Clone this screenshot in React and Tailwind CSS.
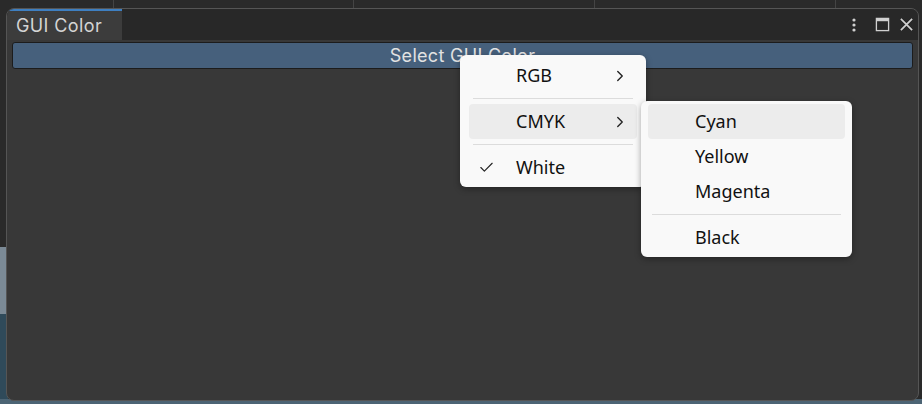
import { ChevronRight, Check } from 'lucide-react';

function MenuItem({ label, check, sub, active }) {
  return (
    <div
      className={`flex items-center h-[35px] rounded-[4px] ${active ? 'bg-[#ececec]' : ''}`}
    >
      <div className="w-[47px] flex justify-start pl-[9px]">
        {check && <Check className="w-[17px] h-[17px] text-[#222]" strokeWidth={1.6} />}
      </div>
      <span className="flex-1">{label}</span>
      {sub && <ChevronRight className="w-[18px] h-[18px] mr-[8px] text-[#222]" strokeWidth={1.8} />}
    </div>
  );
}

function Sep() {
  return <div className="h-px bg-[#dcdcdc] mx-[4px] my-[5px]" />;
}

export default function App() {
  return (
    <div
      className="relative w-[922px] h-[404px] overflow-hidden bg-[#2a2a2a] pt-[8px] pl-[6px]"
      style={{ fontFamily: '"Noto Sans", "Liberation Sans", sans-serif' }}
    >
      {/* backdrop behind the floating window */}
      <div className="absolute left-[113px] top-0 w-px h-[8px] bg-[#444]" />
      <div className="absolute left-[353px] top-0 w-px h-[8px] bg-[#444]" />
      <div className="absolute left-[594px] top-0 w-px h-[8px] bg-[#444]" />
      <div className="absolute left-[835px] top-0 w-px h-[8px] bg-[#444]" />
      <div className="absolute left-0 top-[247px] w-[8px] h-[67px] bg-[#7b8a96]" />
      <div className="absolute left-0 top-[314px] w-[8px] h-[90px] bg-[#2f4a5a]" />
      <div className="absolute left-0 top-[399px] w-[922px] h-[5px] bg-[#4c6474]" />

      {/* window */}
      <div className="relative w-[913px] h-[393px] rounded-[8px] border border-[#555] bg-[#383838] overflow-hidden flex flex-col">
        <div className="h-[31px] bg-[#282828] flex items-stretch">
          <div
            className="w-[115px] bg-[#3c3c3c] border-t-2 border-[#3e7fc1] flex items-center pl-[9px] text-[18px] tracking-[0.4px] text-[#d4d4d4]"
            style={{ fontFamily: 'Inter, "Noto Sans", sans-serif' }}
          >
            GUI Color
          </div>
          <div className="flex-1" />
          <div className="flex items-center gap-[9px] pr-[4px] text-[#d0d0d0]">
            <svg width="6" height="16" viewBox="0 0 6 16" className="mr-[9px]">
              <circle cx="3" cy="3" r="1.6" fill="currentColor" />
              <circle cx="3" cy="8" r="1.6" fill="currentColor" />
              <circle cx="3" cy="13" r="1.6" fill="currentColor" />
            </svg>
            <svg width="15" height="15" viewBox="0 0 16 16">
              <rect x="1.5" y="1.5" width="13" height="13" fill="none" stroke="currentColor" strokeWidth="1.4" />
              <rect x="1.5" y="1.5" width="13" height="3" fill="currentColor" />
            </svg>
            <svg width="15" height="15" viewBox="0 0 16 16">
              <path d="M2 2 L14 14 M14 2 L2 14" stroke="currentColor" strokeWidth="1.8" />
            </svg>
          </div>
        </div>
        <div className="flex-1 px-[5px] pt-[2px]">
          <button
            className="w-full h-[27px] rounded-[3px] border border-[#1c1c1c] bg-[#46607c] text-[#e2e2e2] text-[18px] tracking-[0.3px] leading-none"
            style={{ fontFamily: 'Inter, "Noto Sans", sans-serif' }}
          >
            Select GUI Color
          </button>
        </div>
      </div>

      {/* first menu */}
      <div className="absolute left-[460px] top-[55px] w-[186px] rounded-[6px] bg-[#f9f9f9] shadow-[0_2px_6px_rgba(0,0,0,0.35)] p-[9px] pt-[3px] pb-[2px] text-[18px] text-[#111]">
        <MenuItem label="RGB" sub />
        <Sep />
        <MenuItem label="CMYK" sub active />
        <Sep />
        <MenuItem label="White" check />
      </div>

      {/* submenu */}
      <div className="absolute left-[641px] top-[101px] w-[211px] rounded-[6px] bg-[#f9f9f9] shadow-[0_2px_6px_rgba(0,0,0,0.35)] px-[7px] pt-[3px] pb-[2px] text-[18px] text-[#111]">
        <MenuItem label="Cyan" active />
        <MenuItem label="Yellow" />
        <MenuItem label="Magenta" />
        <Sep />
        <MenuItem label="Black" />
      </div>
    </div>
  );
}
